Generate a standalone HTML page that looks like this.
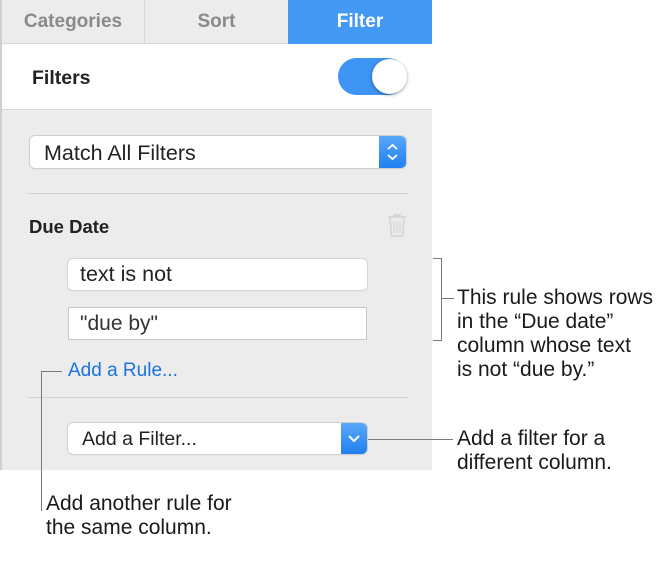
<!DOCTYPE html>
<html><head><style>
*{margin:0;padding:0;box-sizing:border-box}
body{width:666px;height:572px;background:#fff;position:relative;font-family:"Liberation Sans",Arial,sans-serif;overflow:hidden}
.a{position:absolute}
.ln{position:absolute;background:#7a7a7a}
.t{font-size:21px;color:#1a1a1a;line-height:24px}
</style></head><body>
<div class="a" style="left:0;top:0;width:432px;height:470px;background:#ececec;border-left:2px solid #cfcfcf"></div>
<div class="a" style="left:2px;top:0;width:143px;height:44px;background:#ececec;border-right:1px solid #d6d6d6;border-bottom:1px solid #d6d6d6;color:#8a8a8a;font-size:19px;font-weight:bold;text-align:center;line-height:44px">Categories</div>
<div class="a" style="left:145px;top:0;width:143px;height:44px;background:#ececec;border-bottom:1px solid #d6d6d6;color:#8a8a8a;font-size:19px;font-weight:bold;text-align:center;line-height:44px">Sort</div>
<div class="a" style="left:288px;top:0;width:144px;height:44px;background:#4499f5;color:#fff;font-size:19px;font-weight:bold;text-align:center;line-height:44px">Filter</div>
<div class="a" style="left:2px;top:44px;width:430px;height:66px;background:#fff;border-bottom:1px solid #d8d8d8"></div>
<div class="a" style="left:32px;top:67px;font-size:19.5px;font-weight:bold;color:#222">Filters</div>
<div class="a" style="left:338px;top:58px;width:68px;height:37px;border-radius:19px;background:#3d94f2"></div>
<div class="a" style="left:372px;top:59px;width:35px;height:35px;border-radius:50%;background:#fff;box-shadow:0 1px 3px rgba(0,0,0,.4)"></div>
<div class="a" style="left:30px;top:136px;width:376px;height:32px;background:#fff;border-radius:5px;box-shadow:0 0 0 1px #cfcfcf,0 1px 1px rgba(0,0,0,.15)"></div>
<div class="a" style="left:44px;top:141px;font-size:21.5px;color:#222">Match All Filters</div>
<div class="a" style="left:379px;top:136px;width:27px;height:32px;background:linear-gradient(#5aa8fb,#1f7ff0);border-radius:0 5px 5px 0"></div>
<svg class="a" style="left:379px;top:136px" width="27" height="32"><path d="M9 13l4.5-4 4.5 4M9 19l4.5 4 4.5-4" stroke="#fff" stroke-width="1.8" fill="none"/></svg>
<div class="a" style="left:27px;top:193px;width:381px;height:1px;background:#d2d2d2"></div>
<div class="a" style="left:29px;top:216px;font-size:18.5px;font-weight:bold;color:#222">Due Date</div>
<svg class="a" style="left:386px;top:213px" width="22" height="25"><path d="M2 4h18M8 4V2h6v2M4 5l1.5 18h11L18 5" stroke="#d2d2d2" stroke-width="1.5" fill="none"/><path d="M8 8v12M11 8v12M14 8v12" stroke="#d2d2d2" stroke-width="1"/></svg>
<div class="a" style="left:68px;top:259px;width:299px;height:31px;background:#fff;border-radius:5px;box-shadow:0 0 0 1px #d4d4d4,0 1px 1px rgba(0,0,0,.12)"></div>
<div class="a" style="left:80px;top:262px;font-size:21.5px;color:#222">text is not</div>
<div class="a" style="left:68px;top:307px;width:299px;height:33px;background:#fff;border:1px solid #c8c8c8"></div>
<div class="a" style="left:80px;top:312px;font-size:21px;color:#333">"due by"</div>
<div class="a" style="left:68px;top:360px;font-size:19px;color:#1a73e0">Add a Rule...</div>
<div class="a" style="left:27px;top:397px;width:381px;height:1px;background:#d2d2d2"></div>
<div class="a" style="left:68px;top:423px;width:299px;height:31px;background:#fff;border-radius:5px;box-shadow:0 0 0 1px #d0d0d0,0 1px 1px rgba(0,0,0,.15)"></div>
<div class="a" style="left:82px;top:428px;font-size:19.5px;color:#222">Add a Filter...</div>
<div class="a" style="left:341px;top:423px;width:26px;height:31px;background:linear-gradient(#5aa8fb,#1f7ff0);border-radius:0 5px 5px 0"></div>
<svg class="a" style="left:341px;top:423px" width="26" height="31"><path d="M8 13l5 5 5-5" stroke="#fff" stroke-width="2" fill="none"/></svg>
<div class="ln" style="left:433px;top:258px;width:8px;height:1px"></div>
<div class="ln" style="left:441px;top:258px;width:1px;height:83px"></div>
<div class="ln" style="left:433px;top:340px;width:8px;height:1px"></div>
<div class="ln" style="left:441px;top:298px;width:13px;height:1px"></div>
<div class="a t" style="left:457px;top:286px">This rule shows rows<br>in the “Due date”<br>column whose text<br>is not “due by.”</div>
<div class="ln" style="left:368px;top:439px;width:85px;height:1px"></div>
<div class="a t" style="left:457px;top:427px">Add a filter for a<br>different column.</div>
<div class="ln" style="left:41px;top:371px;width:21px;height:1px"></div>
<div class="ln" style="left:41px;top:371px;width:1px;height:140px"></div>
<div class="a t" style="left:46px;top:492px">Add another rule for<br>the same column.</div>
</body></html>
